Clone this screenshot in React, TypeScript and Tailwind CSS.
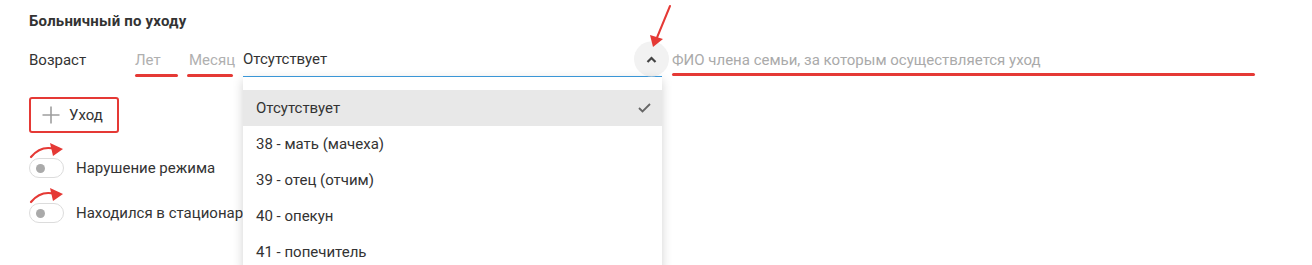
const options = ['Отсутствует', '38 - мать (мачеха)', '39 - отец (отчим)', '40 - опекун', '41 - попечитель']

function CurvedArrow() {
  return (
    <svg className="pointer-events-none absolute left-[-1px] top-[-6px]" width="38" height="18" viewBox="0 0 38 18">
      <path d="M3 15 Q 13 3 27 7" fill="none" stroke="#e53935" strokeWidth="2.2" strokeLinecap="round" />
      <polygon points="35,7 22,1 25,14" fill="#e53935" />
    </svg>
  )
}

function Toggle({ label }: { label: string }) {
  return (
    <div className="relative flex h-[40px] items-center">
      <CurvedArrow />
      <div className="flex h-[20px] w-[35px] items-center rounded-full border border-[#dcdcdc] bg-white">
        <span className="ml-[6px] h-[9px] w-[9px] rounded-full bg-[#aaaaaa]" />
      </div>
      <span className="ml-[12px] whitespace-nowrap text-[15px] text-[#333]">{label}</span>
    </div>
  )
}

export default function App() {
  return (
    <div className="relative h-[265px] w-[1312px] overflow-hidden bg-white px-[29px] pt-[11px] font-['Roboto',sans-serif] text-[#333]">
      <h3 className="text-[15px] font-bold leading-[20px] tracking-[0.2px] text-[#333]">Больничный по уходу</h3>

      <div className="mt-[11px] flex h-[36px] items-stretch">
        <div className="flex w-[106px] items-center text-[15px]">Возраст</div>

        <div className="relative flex w-[44px] items-center text-[15px] text-[#b0b0b0]">
          Лет
          <div className="absolute bottom-[1px] left-0 h-[3px] w-[43px] rounded-full bg-[#e53935]" />
        </div>

        <div className="relative ml-[8px] flex w-[50px] items-center overflow-hidden whitespace-nowrap pl-[2px] text-[15px] text-[#b0b0b0]">
          Месяц
          <div className="absolute bottom-[1px] left-0 h-[3px] w-[46px] rounded-full bg-[#e53935]" />
        </div>

        <div className="relative ml-[6px] flex w-[419px] items-center border-b-2 border-[#3d9de0] text-[15px] text-[#333]">
          Отсутствует
          <div className="absolute right-[-7px] top-1/2 flex h-[35px] w-[35px] -translate-y-1/2 items-center justify-center rounded-full bg-[#f2f2f2]">
            <svg width="11" height="8" viewBox="0 0 11 8">
              <polyline points="1.5,6.5 5.5,2.5 9.5,6.5" fill="none" stroke="#444" strokeWidth="2.2" />
            </svg>
          </div>

          <div className="absolute left-0 top-[calc(100%+1px)] z-10 w-[419px] bg-white pt-[13px] shadow-[0_3px_10px_rgba(0,0,0,0.18)]">
            {options.map((opt, i) => (
              <div
                key={opt}
                className={`flex h-[36px] items-center justify-between pl-[13px] pr-[11px] text-[15px] text-[#333] ${i === 0 ? 'bg-[#e8e8e8]' : ''}`}
              >
                <span>{opt}</span>
                {i === 0 && (
                  <svg width="13" height="10" viewBox="0 0 13 10">
                    <polyline points="1,5 4.5,8.5 12,1" fill="none" stroke="#666" strokeWidth="1.8" />
                  </svg>
                )}
              </div>
            ))}
          </div>
        </div>

        <div className="relative ml-[10px] flex w-[583px] items-center text-[15px] text-[#aaa]">
          ФИО члена семьи, за которым осуществляется уход
          <div className="absolute bottom-[2px] left-0 h-[3px] w-full rounded-full bg-[#e53935]" />
        </div>
      </div>

      <button className="mt-[19px] flex h-[36px] w-[90px] items-center rounded-[3px] border-2 border-[#e53935] pl-[11px] text-[15px] text-[#333]">
        <svg width="18" height="18" viewBox="0 0 18 18">
          <path d="M9 0.5 V17.5 M0.5 9 H17.5" stroke="#9e9e9e" strokeWidth="1.6" />
        </svg>
        <span className="ml-[9px]">Уход</span>
      </button>

      <div className="mt-[15px] flex flex-col gap-[5px]">
        <Toggle label="Нарушение режима" />
        <Toggle label="Находился в стационаре" />
      </div>

      <svg className="pointer-events-none absolute left-[645px] top-0" width="30" height="52" viewBox="0 0 30 52">
        <line x1="25" y1="6" x2="11" y2="40" stroke="#e53935" strokeWidth="2" strokeLinecap="round" />
        <polygon points="8,47 5,35 18,39" fill="#e53935" />
      </svg>
    </div>
  )
}
